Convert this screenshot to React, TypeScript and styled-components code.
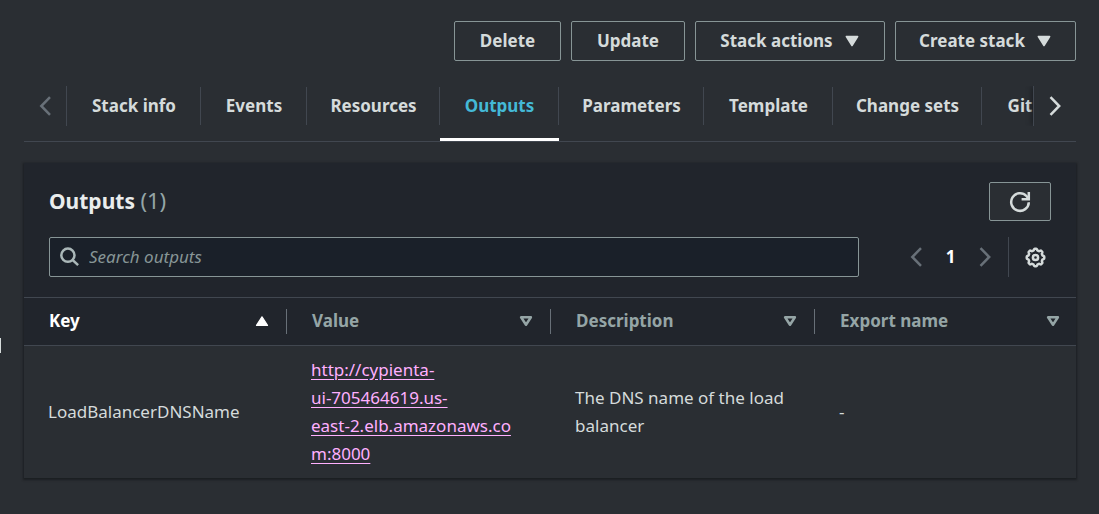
import React from "react";
import styled, { createGlobalStyle } from "styled-components";

const GlobalStyle = createGlobalStyle`
  *, *::before, *::after { box-sizing: border-box; }
  html { background: #2a2e33; }
  body {
    margin: 0;
    background: #2a2e33;
    color: #d5dbdb;
    font-family: "Noto Sans", "Open Sans", sans-serif;
    font-size: 17px;
    line-height: 28px;
  }
  button, input { font: inherit; color: inherit; }
  button { cursor: pointer; }
`;

const Page = styled.div`
  display: flex;
  min-height: 100vh;
`;

const SideStub = styled.aside`
  flex: 0 0 1px;
  margin-top: 338px;
  height: 15px;
  background: #d5dbdb;
`;

const Main = styled.main`
  flex: 1;
  min-width: 0;
  padding: 21px 23px 20px;
`;

const Actions = styled.div`
  display: flex;
  justify-content: flex-end;
  gap: 10px;
`;

const Button = styled.button<{ $width?: number }>`
  display: inline-flex;
  align-items: center;
  justify-content: center;
  gap: 11px;
  min-width: ${(p) => p.$width ?? 62}px;
  height: 40px;
  padding: 0 20px;
  border: 1px solid #879596;
  border-radius: 2px;
  background: #2a2e33;
  font-weight: 700;
`;

const IconButton = styled(Button)`
  height: 39px;
  padding: 0;
`;

const TabBar = styled.div`
  display: flex;
  height: 61px;
  margin-top: 20px;
  padding-top: 5px;
  border-bottom: 1px solid #414750;
`;

const ScrollButton = styled.button<{ $side: "left" | "right" }>`
  flex: 0 0 43px;
  height: 40px;
  display: flex;
  align-items: center;
  justify-content: center;
  padding: 0;
  border: 0 solid #414750;
  background: none;
  color: ${(p) => (p.$side === "left" ? "#687078" : "#d5dbdb")};
  border-width: ${(p) => (p.$side === "left" ? "0 1px 0 0" : "0 0 0 1px")};
  box-shadow: ${(p) => (p.$side === "right" ? "-2px 0 5px -1px #1a1d21" : "none")};
  clip-path: inset(0 0 0 -8px);
`;

const TabList = styled.div`
  display: flex;
  flex: 1;
  min-width: 0;
  overflow: hidden;
`;

const Tab = styled.button<{ $active?: boolean; $width: number }>`
  position: relative;
  flex: 0 0 ${(p) => p.$width}px;
  height: 55px;
  padding: 0 0 13px;
  border: 0;
  background: none;
  font-weight: 700;
  color: ${(p) => (p.$active ? "#44b9d6" : "#d5dbdb")};
  border-bottom: 3px solid ${(p) => (p.$active ? "#fff" : "transparent")};
  &:not(:last-child)::after {
    content: "";
    position: absolute;
    top: 1px;
    right: 0;
    height: 38px;
    border-right: 1px solid #414750;
  }
`;

const Panel = styled.section`
  margin-top: 21px;
  background: #21252c;
  box-shadow: 0 1px 2px 1px #1b1e22;
`;

const PanelHead = styled.header`
  padding: 19px 25px 20px;
`;

const TitleRow = styled.div`
  display: flex;
  justify-content: space-between;
  align-items: flex-start;
`;

const Title = styled.h2`
  margin: 0;
  padding-top: 4px;
  font-size: 21px;
  font-weight: 700;
  color: #eaeded;
`;

const Count = styled.span`
  font-size: 22px;
  font-weight: 400;
  color: #95a5a6;
`;

const Tools = styled.div`
  display: flex;
  align-items: center;
  margin-top: 16px;
`;

const SearchBox = styled.label`
  flex: 1;
  max-width: 810px;
  display: flex;
  align-items: center;
  gap: 9px;
  height: 40px;
  padding: 0 10px;
  border: 1px solid #879596;
  border-radius: 2px;
  background: #1a2029;
  color: #aab7b8;
`;

const SearchInput = styled.input`
  flex: 1;
  min-width: 0;
  border: 0;
  padding: 0;
  outline: 0;
  background: none;
  &::placeholder { color: #879596; font-style: italic; opacity: 1; }
`;

const Pager = styled.nav`
  display: flex;
  align-items: center;
  margin-left: auto;
  padding-right: 11px;
  border-right: 1px solid #414750;
`;

const PlainButton = styled.button<{ $tone?: string }>`
  display: flex;
  align-items: center;
  justify-content: center;
  width: 24px;
  height: 40px;
  padding: 0;
  border: 0;
  background: none;
  color: ${(p) => p.$tone ?? "#d5dbdb"};
`;

const PageNumber = styled(PlainButton)`
  width: 45px;
  font-weight: 700;
  color: #fff;
`;

const Settings = styled(PlainButton)`
  margin-left: 14px;
  margin-right: 4px;
`;

const Table = styled.table`
  width: 100%;
  table-layout: fixed;
  border-collapse: collapse;
  border-top: 1px solid #414750;
`;

const HeadCell = styled.th<{ $sorted?: boolean }>`
  height: 48px;
  padding: 0;
  border-bottom: 1px solid #414750;
  text-align: left;
  font-weight: 700;
  color: ${(p) => (p.$sorted ? "#fff" : "#95a5a6")};
  &:not(:last-child) { width: 25.1%; }
  &:first-child { width: 25%; }
`;

const HeadInner = styled.div<{ $last?: boolean }>`
  display: flex;
  justify-content: space-between;
  align-items: center;
  height: 25px;
  padding: 0 ${(p) => (p.$last ? 15 : 17)}px 2px 25px;
  border-right: 1px solid ${(p) => (p.$last ? "transparent" : "#687078")};
`;

const Cell = styled.td`
  height: 132px;
  padding: 10px 12px 10px 24px;
  background: #2a2e33;
`;

const Link = styled.a`
  color: #ffb0ff;
  text-decoration: underline;
  text-underline-offset: 3px;
`;

const Caret = () => (
  <svg width="16" height="12" viewBox="0 0 16 12" fill="currentColor" aria-hidden="true">
    <path d="M2.4 1.5h11.2L8 10.5z" stroke="currentColor" strokeWidth="1.6" strokeLinejoin="round" />
  </svg>
);

const SortIcon = ({ up }: { up?: boolean }) => (
  <svg width="14" height="12" viewBox="0 0 14 12" stroke="currentColor" aria-hidden="true">
    {up ? (
      <path d="M1.5 10.4h11L7 1.8z" fill="currentColor" strokeWidth="1.2" strokeLinejoin="round" />
    ) : (
      <path d="M2.1 2.2h9.8L7 9.8z" fill="none" strokeWidth="2.5" strokeLinejoin="round" />
    )}
  </svg>
);

const Chevron = ({ left }: { left?: boolean }) => (
  <svg width="20" height="20" viewBox="0 0 20 20" fill="none" stroke="currentColor" strokeWidth="2.5" aria-hidden="true">
    <path d={left ? "M15 1.2 6.3 10l8.7 8.8" : "M5.5 1.2 14.2 10l-8.7 8.8"} />
  </svg>
);

const SearchIcon = () => (
  <svg width="20" height="20" viewBox="0 0 20 20" fill="none" stroke="currentColor" strokeWidth="2.5" aria-hidden="true">
    <circle cx="7.9" cy="8.2" r="6.6" />
    <path d="m12.5 12.8 5.6 5.4" />
  </svg>
);

const RefreshIcon = () => (
  <svg width="22" height="22" viewBox="0 0 22 22" fill="none" stroke="currentColor" strokeWidth="2.5" aria-hidden="true">
    <path d="M19.8 11.2A8.8 8.8 0 1 1 17.4 5l2.2 2.6" />
    <path d="M19.8 1v7.2h-7.2" />
  </svg>
);

const gearPath = (() => {
  const pts: string[] = [];
  for (let i = 0; i <= 96; i++) {
    const a = (i / 96) * Math.PI * 2;
    const r = 8 + 0.8 * Math.tanh(2.2 * Math.cos(8 * a));
    pts.push(`${(10.5 + r * Math.cos(a)).toFixed(2)} ${(10.5 + r * Math.sin(a)).toFixed(2)}`);
  }
  return `M${pts.join("L")}Z`;
})();

const GearIcon = () => (
  <svg width="21" height="21" viewBox="0 0 21 21" fill="none" stroke="currentColor" strokeWidth="2.5" aria-hidden="true">
    <path d={gearPath} />
    <circle cx="10.5" cy="10.5" r="2.6" />
  </svg>
);

const tabs = [
  { label: "Stack info", width: 134 },
  { label: "Events", width: 106 },
  { label: "Resources", width: 133 },
  { label: "Outputs", width: 119 },
  { label: "Parameters", width: 145 },
  { label: "Template", width: 129 },
  { label: "Change sets", width: 149 },
  { label: "Git", width: 76 },
];
const columns = ["Key", "Value", "Description", "Export name"];

export default function App() {
  return (
    <>
      <GlobalStyle />
      <Page>
        <SideStub />
        <Main>
          <Actions>
            <Button $width={107}>Delete</Button>
            <Button $width={114}>Update</Button>
            <Button $width={190}>Stack actions <Caret /></Button>
            <Button $width={181}>Create stack <Caret /></Button>
          </Actions>
          <TabBar>
            <ScrollButton $side="left" aria-label="Scroll left" disabled><Chevron left /></ScrollButton>
            <TabList role="tablist">
              {tabs.map(({ label, width }) => (
                <Tab key={label} role="tab" aria-selected={label === "Outputs"} $active={label === "Outputs"} $width={width}>
                  {label}
                </Tab>
              ))}
            </TabList>
            <ScrollButton $side="right" aria-label="Scroll right"><Chevron /></ScrollButton>
          </TabBar>
          <Panel>
            <PanelHead>
              <TitleRow>
                <Title>Outputs <Count>(1)</Count></Title>
                <IconButton aria-label="Refresh"><RefreshIcon /></IconButton>
              </TitleRow>
              <Tools>
                <SearchBox>
                  <SearchIcon />
                  <SearchInput type="text" aria-label="Search outputs" placeholder="Search outputs" />
                </SearchBox>
                <Pager aria-label="Pagination">
                  <PlainButton $tone="#687078" aria-label="Previous page" disabled><Chevron left /></PlainButton>
                  <PageNumber>1</PageNumber>
                  <PlainButton $tone="#687078" aria-label="Next page" disabled><Chevron /></PlainButton>
                </Pager>
                <Settings aria-label="Preferences"><GearIcon /></Settings>
              </Tools>
            </PanelHead>
            <Table>
              <thead>
                <tr>
                  {columns.map((c, i) => (
                    <HeadCell key={c} scope="col" $sorted={i === 0}>
                      <HeadInner $last={i === columns.length - 1}>{c}<SortIcon up={i === 0} /></HeadInner>
                    </HeadCell>
                  ))}
                </tr>
              </thead>
              <tbody>
                <tr>
                  <Cell>LoadBalancerDNSName</Cell>
                  <Cell>
                    <Link href="http://cypienta-ui-705464619.us-east-2.elb.amazonaws.com:8000">
                      http://cypienta-<br />ui-705464619.us-<br />east-2.elb.amazonaws.co<br />m:8000
                    </Link>
                  </Cell>
                  <Cell>The DNS name of the load balancer</Cell>
                  <Cell>-</Cell>
                </tr>
              </tbody>
            </Table>
          </Panel>
        </Main>
      </Page>
    </>
  );
}
